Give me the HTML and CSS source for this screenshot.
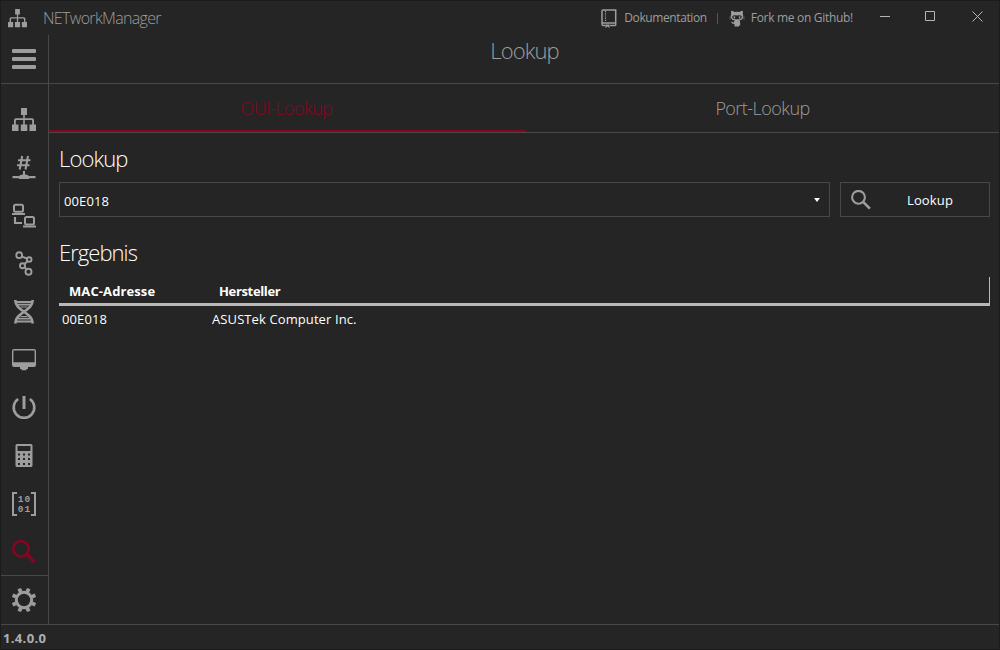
FILE: index.html
```html
<!DOCTYPE html>
<html lang="de">
<head>
<meta charset="utf-8">
<title>NETworkManager</title>
<link rel="stylesheet" href="styles.css">
</head>
<body>
<svg class="defs" aria-hidden="true">
  <symbol id="network" viewBox="0 0 24 24">
    <path d="M9 0h6v7h-6zM0 16.500h6.500v6.500H0zM8.800 16.500h6.500v6.500H8.800zM17.500 16.500H24v6.500h-6.500z"/>
    <path d="M11.200 6h1.600v4.300H20q2 0 2 2V17h-1.800v-4.100q0-.9-.9-.9h-6.500v5h-1.600v-5H4.700q-.9 0-.9.9V17H2v-4.700q0-2 2-2h7.200z"/>
  </symbol>
  <symbol id="search" viewBox="0 0 24 24">
    <circle cx="9" cy="8.700" r="7.700" fill="none" stroke="currentColor" stroke-width="2.500"/>
    <path d="M14.500 14.200L22.700 22.400" fill="none" stroke="currentColor" stroke-width="3.200"/>
  </symbol>
</svg>
<div class="window">
  <header class="titlebar">
    <svg class="app-icon"><use href="#network"/></svg>
    <span class="app-name">NETworkManager</span>
    <nav class="commands">
      <a class="command"><svg class="book" viewBox="0 0 16 19"><path d="M14.700 16.500H9M4.500 16.500H2.500Q1 16.500 1 15V2Q1 1 2 1H14.700V16.500M1 14H14.700" fill="none" stroke="currentColor" stroke-width="1.500"/><path d="M4.500 2v11" fill="none" stroke="currentColor" stroke-width="1.200" stroke-dasharray="1.200 1"/><path d="M4.500 15.500h4V19l-2-1.500-2 1.500z"/></svg><span class="docs-label">Dokumentation</span></a>
      <i class="divider"></i>
      <a class="command"><svg class="octocat" viewBox="0 0 16 17"><path fill-rule="evenodd" d="M2.300 .7Q4 .8 5.500 2Q8 1.500 10.500 2Q12 .8 13.700 .7Q14.200 2.500 13.800 4Q14.600 5.500 14 8Q13.300 10.300 10.300 10.600Q11.200 11.500 11.200 13V15.500H10V16.500H5.500V14Q2.500 14 2 11.800Q3.500 11.500 5 12.500Q5 11.200 5.700 10.600Q2.700 10.300 2 8Q1.400 5.500 2.200 4Q1.800 2.500 2.300 .7zM3.300 6.300Q3 9.300 6 9.300H10Q13 9.300 12.700 6.300Q12 5 8 5.500Q4 5 3.300 6.300z"/><path d="M4.700 6.300h1.400V8.500H4.700zM9.900 6.300h1.400V8.500H9.900z"/><path d="M0 7l2 .4M0 9.200l2-.5M16 7l-2 .4M16 9.200l-2-.5" stroke="currentColor" stroke-width=".4"/></svg><span class="fork-label">Fork me on Github!</span></a>
    </nav>
    <div class="controls">
      <svg viewBox="0 0 11 11"><path d="M0 5.500h10"/></svg>
      <svg viewBox="0 0 11 11"><path d="M.5 .5h9v9h-9z"/></svg>
      <svg viewBox="0 0 11 11"><path d="M.5 .5l10 10M10.500 .5l-10 10"/></svg>
    </div>
  </header>
  <div class="workspace">
    <aside class="sidebar">
      <button class="menu"><i></i><i></i><i></i></button>
      <nav class="tools">
        <a><svg viewBox="0 0 24 24"><use href="#network"/></svg></a>
        <a><svg viewBox="0 0 24 24" class="line"><path d="M10.200 0L7.700 13.500M16 0l-2.500 13.500M6 4.300h12.500M5 9.300h12.500" stroke-width="2.100"/><path d="M.5 21.200h7M16.500 21.200h7" stroke-width="2.200"/><path d="M11 15h2V18.500q4 0 4 2.500v2H7v-2q0-2.500 4-2.500z" fill="currentColor" stroke="none"/></svg></a>
        <a><svg viewBox="0 0 24 24" class="line"><rect x="2" y=".8" width="9" height="7" rx="1.500" stroke-width="2"/><rect x="13" y="13" width="9" height="7.500" rx="1.500" stroke-width="2"/><path d="M0 10h13M11 22.500h13M3 13v6h7" stroke-width="2.100"/></svg></a>
        <a><svg viewBox="0 0 24 24" class="line"><circle cx="7.200" cy="3.200" r="2.900"/><circle cx="17.200" cy="7.500" r="2.300"/><circle cx="10.500" cy="13.700" r="2.500"/><circle cx="16.500" cy="19.700" r="3"/><path d="M10 4.700l4.900 1.800M15.500 9.300L12.500 12M12.700 15.200l1.700 2.200"/></svg></a>
        <a><svg viewBox="0 0 24 24" class="line"><path d="M3.300 0c0 11 17.400 12.500 17.400 23.400M20.700 0c0 11-17.400 12.500-17.400 23.400" stroke-width="2.700"/><path d="M4 2h16M6 4.700h12M6 18.700h12M4 21.500h16" stroke-width="1.800"/><path d="M8.500 7h7M8.500 16.500h7" stroke-width="1.200"/></svg></a>
        <a><svg viewBox="0 0 24 24"><path fill-rule="evenodd" d="M2 1h20q2 0 2 2v14q0 2-2 2h-6v2h-1.500v1.200h-5v-1.200H8v-2H2q-2 0-2-2v-14q0-2 2-2zM1.400 2.800v11.400h21.200V2.800q0-.4-.6-.4H2q-.6 0-.6.4z"/></svg></a>
        <a><svg viewBox="0 0 24 24" class="line"><path d="M6.200 3A10.300 10.300 0 1 0 17.800 3" stroke-width="2.600"/><path d="M12 0v13" stroke-width="3"/></svg></a>
        <a><svg viewBox="0 0 24 24"><path fill-rule="evenodd" d="M5 0h14q1.500 0 1.500 1.500v20q0 1.500-1.500 1.500H5Q3.500 23 3.500 21.500V1.500Q3.500 0 5 0zM5.500 2v5h13V2zM6 9.500v2h2v-2zM11 9.500v2h2v-2zM16 9.500v2h2v-2zM6 14v2h2v-2zM11 14v2h2v-2zM16 14v2h2v-2zM6 19v2h2v-2zM11 19v2h2v-2zM16 19v2h2v-2z"/></svg></a>
        <a><span class="binary"><i></i><b>10<br>01</b><i></i></span></a>
        <a class="selected"><svg viewBox="0 0 24 24"><use href="#search"/></svg></a>
      </nav>
      <a class="settings"><svg viewBox="0 0 24 24" class="line"><circle cx="12" cy="12" r="7.700" stroke-width="3"/><g stroke-width="3.800" transform="rotate(22.500 12 12)"><path d="M12 -.3v3.800M12 20.500v3.800M-.3 12h3.800M20.500 12h3.800"/><path d="M3.300 3.300l2.700 2.700M18 18l2.700 2.700M3.300 20.700l2.700-2.700M18 6l2.700-2.700"/></g></svg></a>
    </aside>
    <main>
      <h1><span>Lookup</span></h1>
      <nav class="tabs"><a class="active"><span class="oui">OUI-Lookup</span></a><a><span class="port">Port-Lookup</span></a></nav>
      <section class="content">
        <h2><span class="lookup-title">Lookup</span></h2>
        <div class="query">
          <div class="combo"><span class="mac">00E018</span><i></i></div>
          <button class="lookup"><svg><use href="#search"/></svg><span>Lookup</span></button>
        </div>
        <h2 class="result"><span class="result-title">Ergebnis</span></h2>
        <div class="table">
          <div class="row head"><span><b class="mac-head">MAC-Adresse</b></span><span><b class="vendor-head">Hersteller</b></span></div>
          <div class="row"><span class="mac">00E018</span><span class="vendor">ASUSTek Computer Inc.</span></div>
        </div>
      </section>
    </main>
  </div>
  <footer><span>1.4.0.0</span></footer>
</div>
</body>
</html>
```
FILE: styles.css
```css
* { box-sizing: border-box; }
body { margin: 0; background: #252525; color: #fff; font: 13px/18px "Open Sans", "Noto Sans", sans-serif; }
svg { display: block; fill: currentColor; overflow: visible; }
.defs { position: absolute; width: 0; height: 0; }
span { white-space: nowrap; }
button { color: inherit; font: inherit; background: none; border: 0; padding: 0; }
.window { width: 1000px; height: 650px; display: flex; flex-direction: column; border: 1px solid #1b1b1b; }
.titlebar { height: 34px; display: flex; flex: none; color: #9d9d9d; }
.app-icon { width: 19px; height: 19px; margin: 8px 0 0 7px; }
.app-name { margin: 6px 0 0 16px; font-size: 16px; line-height: 22px; font-weight: 300; letter-spacing: -.67px; }
.commands { margin-left: auto; display: flex; height: 34px; align-items: center; font-size: 12px; }
.command { display: flex; align-items: center; }
.book { width: 16px; height: 19px; margin-right: 7px; }
.docs-label { letter-spacing: -.4px; }
.fork-label { letter-spacing: -.3px; }
.octocat { width: 16px; height: 17px; margin-right: 6px; }
.divider { width: 1px; height: 11px; margin: 0 11px 0 10px; background: #555; }
.controls { display: flex; width: 146px; padding-top: 10px; color: #b5b5b5; }
.controls svg { width: 11px; height: 11px; margin-left: 27px; fill: none; stroke: currentColor; }
.controls svg + svg { margin-left: 34px; }
.controls svg:last-child { margin-left: 36px; }
.workspace { display: flex; height: 589px; flex: none; }
.sidebar { width: 48px; flex: none; border-right: 1px solid #484848; color: #9d9d9d; display: flex; flex-direction: column; }
.menu { height: 49px; border-bottom: 1px solid #484848; display: flex; flex-direction: column; gap: 4px; align-items: center; padding: 14px 1px 0 0; flex: none; }
.menu i { width: 24px; height: 4px; border-radius: 1px; background: #9d9d9d; }
.tools { height: 492px; padding-top: 12px; border-bottom: 1px solid #484848; flex: none; }
.tools a { display: flex; height: 48px; align-items: center; justify-content: center; padding-right: 1px; }
.tools svg, .settings svg { width: 24px; height: 24px; }
.line { fill: none; stroke: currentColor; stroke-width: 1.9; }
.tools .selected { color: #870524; padding-bottom: 1px; }
.settings { height: 48px; display: flex; align-items: center; justify-content: center; padding-right: 1px; }
.binary { display: flex; width: 24px; height: 24px; justify-content: space-between; margin-top: -1px; }
.binary i { width: 5px; border: 2px solid #9d9d9d; border-right: 0; }
.binary i:last-child { border: 2px solid #9d9d9d; border-left: 0; }
.binary b { font: bold 9.5px/10px "Liberation Mono", monospace; letter-spacing: 1px; padding: 3px 0 0 1px; }
main { flex: 1; min-width: 0; }
h1, h2 { margin: 0; font-weight: 300; }
h1 { height: 49px; border-bottom: 1px solid #484848; text-align: center; color: #9d9d9d; font-size: 22px; line-height: 31px; letter-spacing: -.9px; padding-left: 1px; }
.tabs { height: 49px; display: flex; border-bottom: 1px solid #484848; color: #9d9d9d; font-size: 18px; font-weight: 300; line-height: 49px; text-align: center; letter-spacing: -.55px; }
.tabs a { width: 473px; flex: 1; height: 48px; }
.tabs .active { flex: 0 0 477px; color: #870524; border-bottom: 2px solid #870524; padding-right: 2px; }
.content { padding: 10px 9px 0 10px; }
h2 { font-size: 22px; line-height: 30px; letter-spacing: -.9px; }
.query { display: flex; gap: 10px; height: 35px; margin-top: 9px; }
.combo { flex: 1; border: 1px solid #484848; display: flex; justify-content: space-between; align-items: center; padding: 2px 9px 0 4px; }
.mac { letter-spacing: .1px; }
.vendor { letter-spacing: .1px; }
.combo i { border: 3.5px solid transparent; border-top: 4px solid #fff; border-bottom: 0; margin-top: -2px; }
.lookup { width: 150px; border: 1px solid #484848; display: flex; align-items: center; }
.lookup svg { width: 20px; height: 20px; margin-left: 10px; color: #9d9d9d; }
.lookup span { flex: 1; text-align: center; letter-spacing: .15px; }
.result { margin-top: 20px; }
.result-title { letter-spacing: -.95px; }
.table { margin-top: 10px; }
.row { display: grid; grid-template-columns: 150px 1fr; padding: 4px 3px; }
.head { height: 29px; padding: 5px 10px 0; border-bottom: 3px solid #b9b9b9; border-right: 1px solid #b9b9b9; }
.head b { font-weight: 700; }
.mac-head { letter-spacing: .1px; }
.vendor-head { letter-spacing: -.35px; }
footer { border-top: 1px solid #484848; flex: 1; padding: 4px 0 0 2px; color: #b0b0b0; font-weight: 700; letter-spacing: .35px; }
```
